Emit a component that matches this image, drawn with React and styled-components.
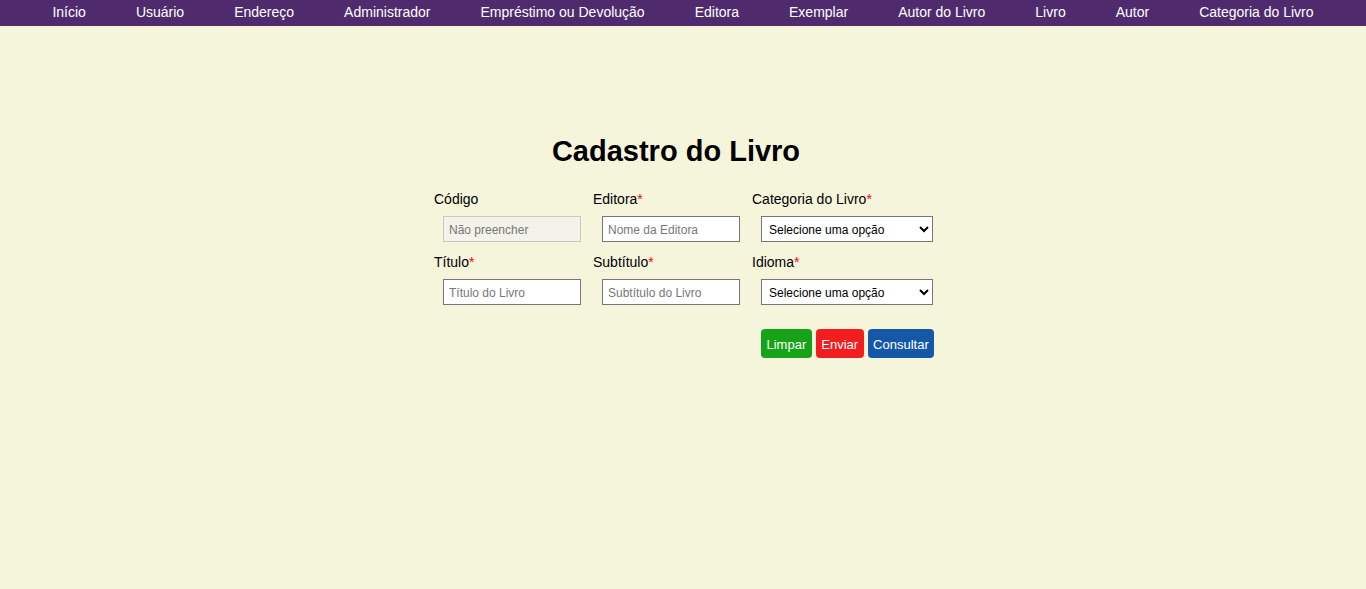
import React from "react";
import styled, { createGlobalStyle } from "styled-components";

const GlobalStyle = createGlobalStyle`
  body {
    margin: 0;
    background-color: #f5f5dc;
    font-family: "Liberation Sans", Arial, sans-serif;
  }
`;

const links = [
  "Início",
  "Usuário",
  "Endereço",
  "Administrador",
  "Empréstimo ou Devolução",
  "Editora",
  "Exemplar",
  "Autor do Livro",
  "Livro",
  "Autor",
  "Categoria do Livro",
];

const App = () => {
  return (
    <>
      <GlobalStyle />
      <Nav>
        {links.map((link) => (
          <NavLink key={link} href="#">{link}</NavLink>
        ))}
      </Nav>
      <Main>
        <Wrapper>
          <Title>Cadastro do Livro</Title>
          <Form onSubmit={(e) => e.preventDefault()}>
            <Field>
              <Label>Código</Label>
              <Input type="text" placeholder="Não preencher" disabled />
            </Field>
            <Field>
              <Label>Editora<Req>*</Req></Label>
              <Input type="text" placeholder="Nome da Editora" />
            </Field>
            <Field>
              <Label>Categoria do Livro<Req>*</Req></Label>
              <Select defaultValue="">
                <option value="">Selecione uma opção</option>
              </Select>
            </Field>
            <Field>
              <Label>Título<Req>*</Req></Label>
              <Input type="text" placeholder="Título do Livro" />
            </Field>
            <Field>
              <Label>Subtítulo<Req>*</Req></Label>
              <Input type="text" placeholder="Subtítulo do Livro" />
            </Field>
            <Field>
              <Label>Idioma<Req>*</Req></Label>
              <Select defaultValue="">
                <option value="">Selecione uma opção</option>
              </Select>
            </Field>
            <Buttons>
              <Button type="reset" color="#17a317">Limpar</Button>
              <Button type="submit" color="#f21d1f">Enviar</Button>
              <Button type="button" color="#1458a7">Consultar</Button>
            </Buttons>
          </Form>
        </Wrapper>
      </Main>
    </>
  );
};

export default App;

const Nav = styled.nav`
  height: 26px;
  background-color: #4f2b6e;
  display: flex;
  align-items: center;
  justify-content: center;
  gap: 50px;
`;

const NavLink = styled.a`
  color: #fff;
  font-size: 14px;
  line-height: 16px;
  padding-bottom: 2px;
  text-decoration: none;
  white-space: nowrap;
`;

const Main = styled.main`
  display: flex;
  justify-content: center;
  padding: 109px 14px 0 0;
`;

const Wrapper = styled.div`
  width: 484px;
  display: flex;
  flex-direction: column;
  align-items: center;
`;

const Title = styled.h1`
  margin: 0;
  font-size: 29px;
  line-height: 33px;
  font-weight: bold;
  color: #000;
`;

const Form = styled.form`
  width: 100%;
  margin-top: 23px;
  display: grid;
  grid-template-columns: 159px 159px 166px;
  row-gap: 12px;
`;

const Field = styled.div`
  display: flex;
  flex-direction: column;
  gap: 9px;
`;

const Label = styled.label`
  font-size: 14px;
  line-height: 16px;
  color: #000;
`;

const Req = styled.span`
  color: #f00;
`;

const Input = styled.input`
  box-sizing: border-box;
  margin-left: 9px;
  width: 138px;
  height: 26px;
  padding: 1px 5px 0;
  border: 1px solid #767676;
  background: #fff;
  font-family: "Liberation Sans", Arial, sans-serif;
  font-size: 12px;
  outline: none;
  &::placeholder {
    color: #777;
  }
  &:disabled {
    background: #f3f3ea;
    border-color: #c9c9bd;
  }
`;

const Select = styled.select`
  box-sizing: border-box;
  margin-left: 9px;
  width: 172px;
  height: 26px;
  padding: 1px 3px 0;
  border: 1px solid #767676;
  border-radius: 0;
  background: #fff;
  font-family: "Liberation Sans", Arial, sans-serif;
  font-size: 12px;
  color: #000;
`;

const Buttons = styled.div`
  grid-column: 3;
  margin-top: 12px;
  padding-left: 9px;
  display: flex;
  gap: 4px;
  white-space: nowrap;
`;

const Button = styled.button`
  height: 29px;
  padding: 1px 5.5px 0;
  border: none;
  border-radius: 4px;
  background-color: ${(p) => p.color};
  color: #fff;
  font-family: "Liberation Sans", Arial, sans-serif;
  font-size: 13px;
  cursor: pointer;
`;
